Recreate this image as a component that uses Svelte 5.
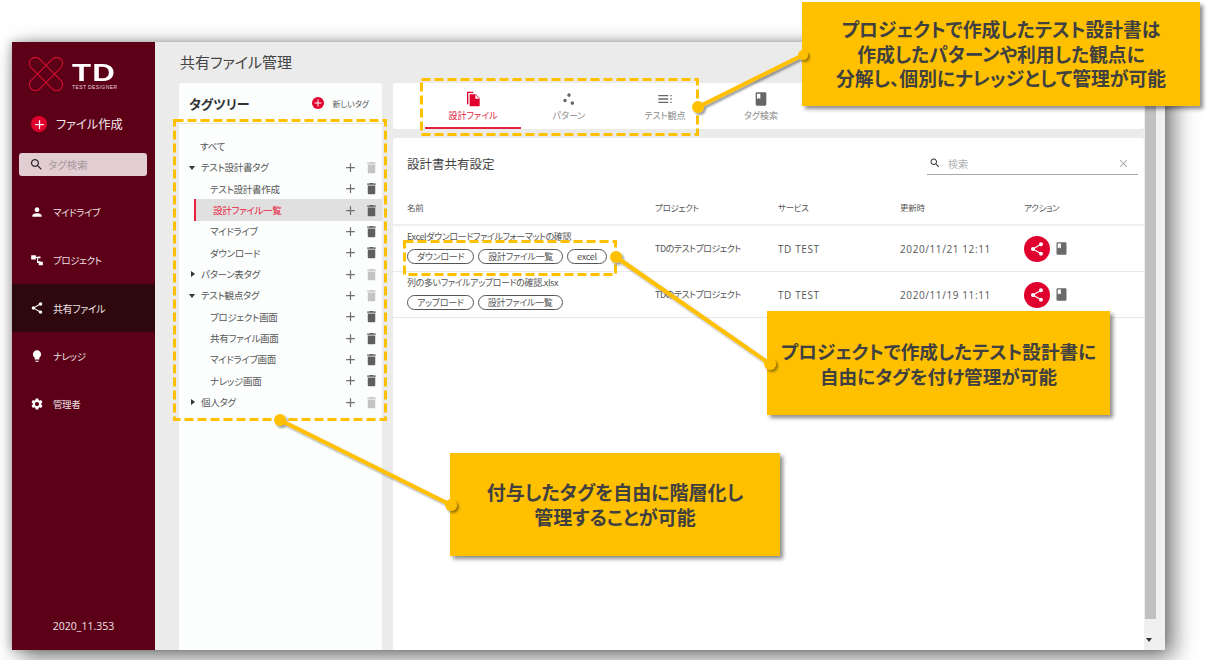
<script>
  const P = {
    person: 'M12 12c2.21 0 4-1.79 4-4s-1.79-4-4-4-4 1.79-4 4 1.79 4 4 4zm0 2c-2.67 0-8 1.34-8 4v2h16v-2c0-2.66-5.33-4-8-4z',
    project: 'M2 4h8v7H2zM14 6h4v3h-4zM14 14h4v3h-4zM15 15h7v6h-7zM10 6.5h5v2h-5zM12 8h2v9h-2z',
    share: 'M18 16.08c-.76 0-1.44.3-1.96.77L8.91 12.7c.05-.23.09-.46.09-.7s-.04-.47-.09-.7l7.05-4.11c.54.5 1.25.81 2.04.81 1.66 0 3-1.34 3-3s-1.34-3-3-3-3 1.34-3 3c0 .24.04.47.09.7L8.04 9.81C7.5 9.31 6.79 9 6 9c-1.66 0-3 1.34-3 3s1.34 3 3 3c.79 0 1.5-.31 2.04-.81l7.12 4.16c-.05.21-.08.43-.08.65 0 1.61 1.31 2.92 2.92 2.92 1.61 0 2.92-1.31 2.92-2.92s-1.31-2.92-2.92-2.92z',
    bulb: 'M9 21c0 .55.45 1 1 1h4c.55 0 1-.45 1-1v-1H9v1zm3-19C8.14 2 5 5.14 5 9c0 2.38 1.19 4.47 3 5.74V17c0 .55.45 1 1 1h6c.55 0 1-.45 1-1v-2.26c1.81-1.27 3-3.36 3-5.74 0-3.86-3.14-7-7-7z',
    gear: 'M19.14 12.94c.04-.3.06-.61.06-.94 0-.32-.02-.64-.07-.94l2.03-1.58c.18-.14.23-.41.12-.61l-1.92-3.32c-.12-.22-.37-.29-.59-.22l-2.39.96c-.5-.38-1.03-.7-1.62-.94l-.36-2.54c-.04-.24-.24-.41-.48-.41h-3.84c-.24 0-.43.17-.47.41l-.36 2.54c-.59.24-1.13.57-1.62.94l-2.39-.96c-.22-.08-.47 0-.59.22L2.74 8.87c-.12.21-.08.47.12.61l2.03 1.58c-.05.3-.09.63-.09.94s.02.64.07.94l-2.03 1.58c-.18.14-.23.41-.12.61l1.92 3.32c.12.22.37.29.59.22l2.39-.96c.5.38 1.03.7 1.62.94l.36 2.54c.05.24.24.41.48.41h3.84c.24 0 .44-.17.47-.41l.36-2.54c.59-.24 1.13-.56 1.62-.94l2.39.96c.22.08.47 0 .59-.22l1.92-3.32c.12-.22.07-.47-.12-.61l-2.01-1.58zM12 15.6c-1.98 0-3.6-1.62-3.6-3.6s1.62-3.6 3.6-3.6 3.6 1.62 3.6 3.6-1.62 3.6-3.6 3.6z',
    search: 'M15.5 14h-.79l-.28-.27C15.41 12.59 16 11.11 16 9.5 16 5.91 13.09 3 9.5 3S3 5.91 3 9.5 5.91 16 9.5 16c1.61 0 3.09-.59 4.23-1.57l.27.28v.79l5 4.99L20.49 19l-4.99-5zm-6 0C7.01 14 5 11.99 5 9.5S7.01 5 9.5 5 14 7.01 14 9.5 11.99 14 9.5 14z',
    trash: 'M6 19c0 1.1.9 2 2 2h8c1.1 0 2-.9 2-2V7H6v12zM19 4h-3.5l-1-1h-5l-1 1H5v2h14V4z',
    plus: 'M19 13h-6v6h-2v-6H5v-2h6V5h2v6h6v2z',
    book: 'M18 2H6c-1.1 0-2 .9-2 2v16c0 1.1.9 2 2 2h12c1.1 0 2-.9 2-2V4c0-1.1-.9-2-2-2zM6 4h5v8l-2.5-1.5L6 12V4z',
    files: 'M3 1h10l-1 2H5v17H3zM7 5h9l6 6v12H7zM15.5 5.5v6h6z',
    dots: 'M12 3.5a2.6 2.6 0 1 0 .01 0zM6 11.5a2.6 2.6 0 1 0 .01 0zM17 15.5a2.6 2.6 0 1 0 .01 0z',
    list: 'M2 6h15v2H2zM2 11h15v2H2zM2 16h15v2H2zM20 6h2v2h-2zM20 11h2v2h-2zM20 16h2v2h-2z',
    close: 'M19 6.41 17.59 5 12 10.59 6.41 5 5 6.41 10.59 12 5 17.59 6.41 19 12 13.41 17.59 19 19 17.59 13.41 12z'
  };

  const nav = [
    { icon: 'person', label: 'マイドライブ' },
    { icon: 'project', label: 'プロジェクト' },
    { icon: 'share', label: '共有ファイル', active: true },
    { icon: 'bulb', label: 'ナレッジ' },
    { icon: 'gear', label: '管理者' }
  ];

  const tree = [
    { label: 'テスト設計書タグ', caret: 'down', faded: true },
    { label: 'テスト設計書作成', child: true },
    { label: '設計ファイル一覧', child: true, selected: true },
    { label: 'マイドライブ', child: true },
    { label: 'ダウンロード', child: true },
    { label: 'パターン表タグ', caret: 'right', faded: true },
    { label: 'テスト観点タグ', caret: 'down', faded: true },
    { label: 'プロジェクト画面', child: true },
    { label: '共有ファイル画面', child: true },
    { label: 'マイドライブ画面', child: true },
    { label: 'ナレッジ画面', child: true },
    { label: '個人タグ', caret: 'right', faded: true }
  ];

  const tabs = [
    { icon: 'files', label: '設計ファイル', active: true },
    { icon: 'dots', label: 'パターン' },
    { icon: 'list', label: 'テスト観点' },
    { icon: 'book', label: 'タグ検索' }
  ];

  const rows = [
    { name: 'Excelダウンロードファイルフォーマットの確認', tags: ['ダウンロード', '設計ファイル一覧', 'excel'], date: '2020/11/21 12:11' },
    { name: '列の多いファイルアップロードの確認.xlsx', tags: ['アップロード', '設計ファイル一覧'], date: '2020/11/19 11:11' }
  ];
</script>

{#snippet icon(name, cls)}
  <svg class={cls} viewBox="0 0 24 24" aria-hidden="true"><path d={P[name]} /></svg>
{/snippet}

<div class="page">
  <div class="window">
    <aside class="side">
      <div class="logo">
        <svg class="mark" viewBox="0 0 34 34" aria-hidden="true">
          <g fill="none" stroke="#d90f2d" stroke-width="1">
            <rect x="11" y="-4" width="12" height="42" rx="6" transform="rotate(45 17 17)" />
            <rect x="11" y="-4" width="12" height="42" rx="6" transform="rotate(-45 17 17)" />
          </g>
        </svg>
        <div class="brand">
          <div class="td">TD</div>
          <div class="tdsub">TEST DESIGNER</div>
        </div>
      </div>
      <div class="create">
        <span class="redplus"><svg viewBox="0 0 24 24"><path d={P.plus} /></svg></span>
        <span>ファイル作成</span>
      </div>
      <div class="tagsearch">
        {@render icon('search', 'tsicon')}
        <span>タグ検索</span>
      </div>
      <nav class="nav">
        {#each nav as n}
          <div class="navrow" class:active={n.active}>
            {@render icon(n.icon, 'navicon')}
            <span>{n.label}</span>
          </div>
        {/each}
      </nav>
      <div class="version">2020_11.353</div>
    </aside>

    <main class="main">
      <h1 class="title">共有ファイル管理</h1>
      <div class="cols">
        <section class="tagpanel">
          <header class="taghead">
            <strong>タグツリー</strong>
            <div class="newtag">
              <span class="redplus small"><svg viewBox="0 0 24 24"><path d={P.plus} /></svg></span>
              <span>新しいタグ</span>
            </div>
          </header>
          <div class="tree">
            <div class="trow"><span class="tlabel all">すべて</span></div>
            {#each tree as t}
              <div class="trow" class:child={t.child} class:selected={t.selected}>
                {#if t.caret}<span class="caret {t.caret}"></span>{/if}
                <span class="tlabel">{t.label}</span>
                {@render icon('plus', 'tplus')}
                {@render icon('trash', t.faded ? 'ttrash faded' : 'ttrash')}
              </div>
            {/each}
          </div>
        </section>

        <div class="rightcol">
          <div class="tabs">
            {#each tabs as t}
              <div class="tab" class:active={t.active}>
                {@render icon(t.icon, 'tabicon')}
                <span>{t.label}</span>
              </div>
            {/each}
          </div>
          <section class="content">
            <div class="chead">
              <h2>設計書共有設定</h2>
              <div class="csearch">
                {@render icon('search', 'csicon')}
                <span class="ph">検索</span>
                {@render icon('close', 'csclose')}
              </div>
            </div>
            <div class="grid ghead">
              <span>名前</span><span>プロジェクト</span><span>サービス</span><span>更新時</span><span>アクション</span>
            </div>
            {#each rows as r}
              <div class="grid grow">
                <div class="namecell">
                  <div class="fname">{r.name}</div>
                  <div class="pills">
                    {#each r.tags as tag}<span class="pill">{tag}</span>{/each}
                  </div>
                </div>
                <span class="proj">TDのテストプロジェクト</span>
                <span class="latin">TD TEST</span>
                <span class="latin">{r.date}</span>
                <div class="actions">
                  <span class="sharebtn"><svg viewBox="0 0 24 24"><path d={P.share} /></svg></span>
                  {@render icon('book', 'bookic')}
                </div>
              </div>
            {/each}
          </section>
        </div>

        <div class="scrollbar">
          <div class="thumb"></div>
          <span class="arrow"></span>
        </div>
      </div>
    </main>
  </div>

  <div class="note n1">プロジェクトで作成したテスト設計書は<br />作成したパターンや利用した観点に<br />分解し、個別にナレッジとして管理が可能</div>
  <div class="note n2">プロジェクトで作成したテスト設計書に<br />自由にタグを付け管理が可能</div>
  <div class="note n3">付与したタグを自由に階層化し<br />管理することが可能</div>

  <svg class="lines" viewBox="0 0 1230 660" aria-hidden="true">
    <defs>
      <filter id="sh" x="-20%" y="-20%" width="140%" height="140%">
        <feDropShadow dx="2" dy="2" stdDeviation="1.2" flood-color="#000" flood-opacity="0.4" />
      </filter>
    </defs>
    <g fill="none" stroke="#ffc000" stroke-width="3" stroke-dasharray="9 4">
      <rect x="174.5" y="120.5" width="211" height="299" />
      <rect x="421.5" y="79.5" width="276" height="55" />
      <rect x="404.5" y="241.5" width="211" height="33" />
    </g>
    <g filter="url(#sh)" stroke="#ffc000" stroke-width="4" fill="#ffc000">
      <line x1="698" y1="107" x2="803" y2="55" />
      <circle cx="698" cy="107" r="6" stroke="none" />
      <circle cx="803" cy="55" r="5" stroke="none" />
      <line x1="616" y1="257" x2="770" y2="364" />
      <circle cx="616" cy="257" r="6" stroke="none" />
      <circle cx="770" cy="364" r="6" stroke="none" />
      <line x1="280" y1="420" x2="451" y2="505" />
      <circle cx="280" cy="420" r="6" stroke="none" />
      <circle cx="451" cy="505" r="6" stroke="none" />
    </g>
  </svg>
</div>

<style>
  :global(body) {
    margin: 0;
    background: #fff;
    overflow: hidden;
    font-family: "Noto Sans CJK JP", "Noto Sans", sans-serif;
    font-feature-settings: "palt";
    color: #444;
  }
  .page {
    position: relative;
    width: 1230px;
    height: 660px;
    padding: 42px 65px 10px 12px;
    box-sizing: border-box;
    overflow: hidden;
  }
  .window {
    display: flex;
    height: 608px;
    background: #ebebeb;
    box-shadow: 8px 7px 22px rgba(0, 0, 0, 0.55), 0 -2px 8px rgba(0, 0, 0, 0.1), -3px 0 8px rgba(0, 0, 0, 0.12);
  }
  svg { display: block; fill: currentColor; }

  .side {
    width: 143px;
    flex: none;
    background: #5c0018;
    color: #fff;
    display: flex;
    flex-direction: column;
  }
  .logo {
    display: flex;
    align-items: flex-start;
    padding: 15px 0 0 17px;
    height: 45px;
  }
  .mark { width: 34px; height: 34px; }
  .brand { margin: 5px 0 0 9px; }
  .td {
    font: 700 24px/22px "Liberation Sans", sans-serif;
    letter-spacing: 1px;
    transform: scaleX(1.3);
    transform-origin: left center;
    width: 44px;
  }
  .tdsub {
    font: 400 5px/6px "Liberation Sans", sans-serif;
    letter-spacing: .4px;
    color: #e8d8dc;
    white-space: nowrap;
    font-feature-settings: normal;
  }
  .create {
    display: flex;
    align-items: center;
    gap: 9px;
    padding-left: 19px;
    margin-top: 10px;
    height: 24px;
    font-size: 12.2px;
    color: #f4e8ea;
  }
  .redplus {
    width: 16px;
    height: 16px;
    border-radius: 50%;
    background: #e0002d;
    color: #fff;
    display: flex;
    align-items: center;
    justify-content: center;
    flex: none;
  }
  .redplus svg { width: 15px; height: 15px; }
  .redplus.small { width: 12px; height: 12px; }
  .redplus.small svg { width: 12px; height: 12px; }
  .tagsearch {
    margin: 17px 8px 0 7px;
    height: 23px;
    border-radius: 3px;
    background: #e1cdd2;
    display: flex;
    align-items: center;
    gap: 4px;
    padding-left: 10px;
    font-size: 10.5px;
    color: #a4999c;
  }
  :global(.tsicon) { width: 15px; height: 15px; color: #2a2a2a; }
  .nav { margin-top: 12px; }
  .navrow {
    height: 48px;
    display: flex;
    align-items: center;
    gap: 9px;
    padding-left: 18px;
    font-size: 9.5px;
    letter-spacing: -.4px;
    color: #eee2e5;
  }
  .navrow.active { background: #2d090d; font-size: 10px; }
  :global(.navicon) { width: 14px; height: 14px; color: #fff; }
  .version {
    margin-top: auto;
    padding-bottom: 17px;
    text-align: center;
    font: 400 10.5px/14px "Open Sans", sans-serif;
    color: #f0e4e8;
  }

  .main { flex: 1; min-width: 0; display: flex; flex-direction: column; }
  .title {
    margin: 0;
    padding-left: 25px;
    height: 41px;
    line-height: 40px;
    font-size: 15px;
    font-weight: 400;
    color: #444;
  }
  .cols { flex: 1; display: flex; min-height: 0; padding-left: 24px; }

  .tagpanel {
    width: 203px;
    flex: none;
    background: #fcfefe;
    border-radius: 3px 3px 0 0;
    display: flex;
    flex-direction: column;
  }
  .taghead {
    height: 41px;
    flex: none;
    box-sizing: border-box;
    border-bottom: 1px solid #e6e6e6;
    display: flex;
    align-items: center;
    justify-content: space-between;
    padding: 0 13px 0 10px;
  }
  .taghead strong { font-size: 13px; font-weight: 700; color: #333; }
  .newtag { display: flex; align-items: center; gap: 8px; font-size: 8px; color: #555; }
  .tree { padding: 11.5px 0 0 15px; }
  .trow {
    height: 21.33px;
    display: flex;
    align-items: center;
    font-size: 9.5px;
    letter-spacing: -.3px;
    color: #555;
    position: relative;
    box-sizing: border-box;
  }
  .tlabel { flex: 1; padding-left: 7px; white-space: nowrap; }
  .tlabel.all { padding-left: 6px; }
  .trow.child .tlabel { padding-left: 16px; }
  .trow.selected { background: #e0e0e0; border-left: 2px solid #e8213f; color: #e8213f; }
  .trow.selected .tlabel { padding-left: 17px; }
  .caret {
    width: 0;
    height: 0;
    position: absolute;
    flex: none;
  }
  .caret.down {
    left: -5px;
    border-left: 3.5px solid transparent;
    border-right: 3.5px solid transparent;
    border-top: 4px solid #333;
    margin-top: 1px;
  }
  .caret.right {
    left: -3px;
    border-top: 3.5px solid transparent;
    border-bottom: 3.5px solid transparent;
    border-left: 4px solid #333;
  }
  :global(.tplus) { width: 15px; height: 15px; color: #707070; margin-right: 6px; flex: none; }
  :global(.ttrash) { width: 15px; height: 15px; color: #5f5f5f; margin-right: 3px; flex: none; }
  :global(.ttrash.faded) { color: #c4c4c4; }

  .rightcol { width: 751px; margin-left: 11px; flex: none; display: flex; flex-direction: column; gap: 9px; }
  .tabs {
    height: 46px;
    flex: none;
    background: #fff;
    border-radius: 3px;
    display: flex;
    padding-left: 32px;
    box-sizing: border-box;
  }
  .tab {
    width: 96px;
    display: flex;
    flex-direction: column;
    align-items: center;
    padding-top: 8px;
    box-sizing: border-box;
    font-size: 9px;
    color: #8a8a8a;
    line-height: 13px;
  }
  .tab.active { color: #e0213c; border-bottom: 2px solid #e0213c; }
  :global(.tabicon) { width: 16px; height: 16px; margin-bottom: 2px; color: #666; }
  .tab.active :global(.tabicon) { color: #e0002d; }

  .content { flex: 1; background: #fff; border-radius: 3px 3px 0 0; min-height: 0; font-size: 10px; }
  .chead {
    display: flex;
    align-items: flex-start;
    justify-content: space-between;
    padding: 16px 6px 0 14px;
    height: 46px;
    box-sizing: border-box;
  }
  .chead h2 { margin: 0; font-size: 12.5px; line-height: 20px; font-weight: 400; color: #444; }
  .csearch {
    width: 211px;
    height: 21px;
    box-sizing: border-box;
    border-bottom: 1px solid #a8a8a8;
    display: flex;
    align-items: center;
    padding: 0 8px 2px 2px;
    gap: 7px;
    font-size: 10px;
    color: #b0b0b0;
  }
  .ph { flex: 1; }
  :global(.csicon) { width: 12px; height: 12px; color: #333; }
  :global(.csclose) { width: 13px; height: 13px; color: #b4b4b4; }
  .grid {
    display: grid;
    grid-template-columns: 248px 123px 122px 124px 1fr;
    padding-left: 14px;
    align-items: center;
    color: #555;
    box-sizing: border-box;
  }
  .ghead { height: 42px; font-size: 8.5px; letter-spacing: -.3px; border-bottom: 2px solid #efefef; padding-top: 6px; }
  .grow { height: 46px; border-bottom: 1px solid #e8e8e8; font-size: 9px; }
  .proj { letter-spacing: -.5px; }
  .latin { font-family: "Open Sans", "Noto Sans CJK JP", sans-serif; font-size: 10px; letter-spacing: .6px; }
  .namecell { display: flex; flex-direction: column; gap: 5px; align-self: start; padding-top: 4px; }
  .fname { font-size: 9px; letter-spacing: -.4px; line-height: 14px; white-space: nowrap; color: #555; }
  .pills { display: flex; gap: 4px; }
  .pill {
    border: 1px solid #555;
    border-radius: 8px;
    height: 15px;
    line-height: 13px;
    box-sizing: border-box;
    padding: 0 9px;
    font-size: 9px;
    letter-spacing: -.3px;
    color: #555;
    white-space: nowrap;
  }
  .actions { display: flex; align-items: center; gap: 4px; }
  .sharebtn {
    width: 26px;
    height: 26px;
    border-radius: 50%;
    background: #e0002d;
    color: #fff;
    display: flex;
    align-items: center;
    justify-content: center;
  }
  .sharebtn svg { width: 16px; height: 16px; }
  :global(.bookic) { width: 15px; height: 15px; color: #6a6a6a; }

  .scrollbar {
    flex: 1;
    margin-top: -41px;
    background: #f0f0f0;
    padding-left: 1px;
    position: relative;
  }
  .thumb { width: 11px; height: 577px; background: #c0c0c0; }
  .arrow {
    position: absolute;
    left: 2px;
    bottom: 8px;
    border-left: 3.5px solid transparent;
    border-right: 3.5px solid transparent;
    border-top: 4px solid #333;
  }

  .lines { position: absolute; left: 0; top: 0; width: 1230px; height: 660px; pointer-events: none; }

  .note {
    position: absolute;
    text-align: center;
    background: #ffc000;
    color: #404040;
    font-weight: 700;
    box-shadow: 3px 3px 4px rgba(0, 0, 0, 0.45);
    box-sizing: border-box;
  }
  .n1 { left: 802px; top: 2px; width: 398px; height: 104px; font-size: 18.8px; line-height: 24.5px; padding-top: 15px; }
  .n2 { left: 767px; top: 311px; width: 343px; height: 104px; font-size: 18.6px; line-height: 24.5px; padding-top: 28px; }
  .n3 { left: 450px; top: 453px; width: 330px; height: 103px; font-size: 19px; line-height: 24.5px; padding-top: 27px; }
</style>
